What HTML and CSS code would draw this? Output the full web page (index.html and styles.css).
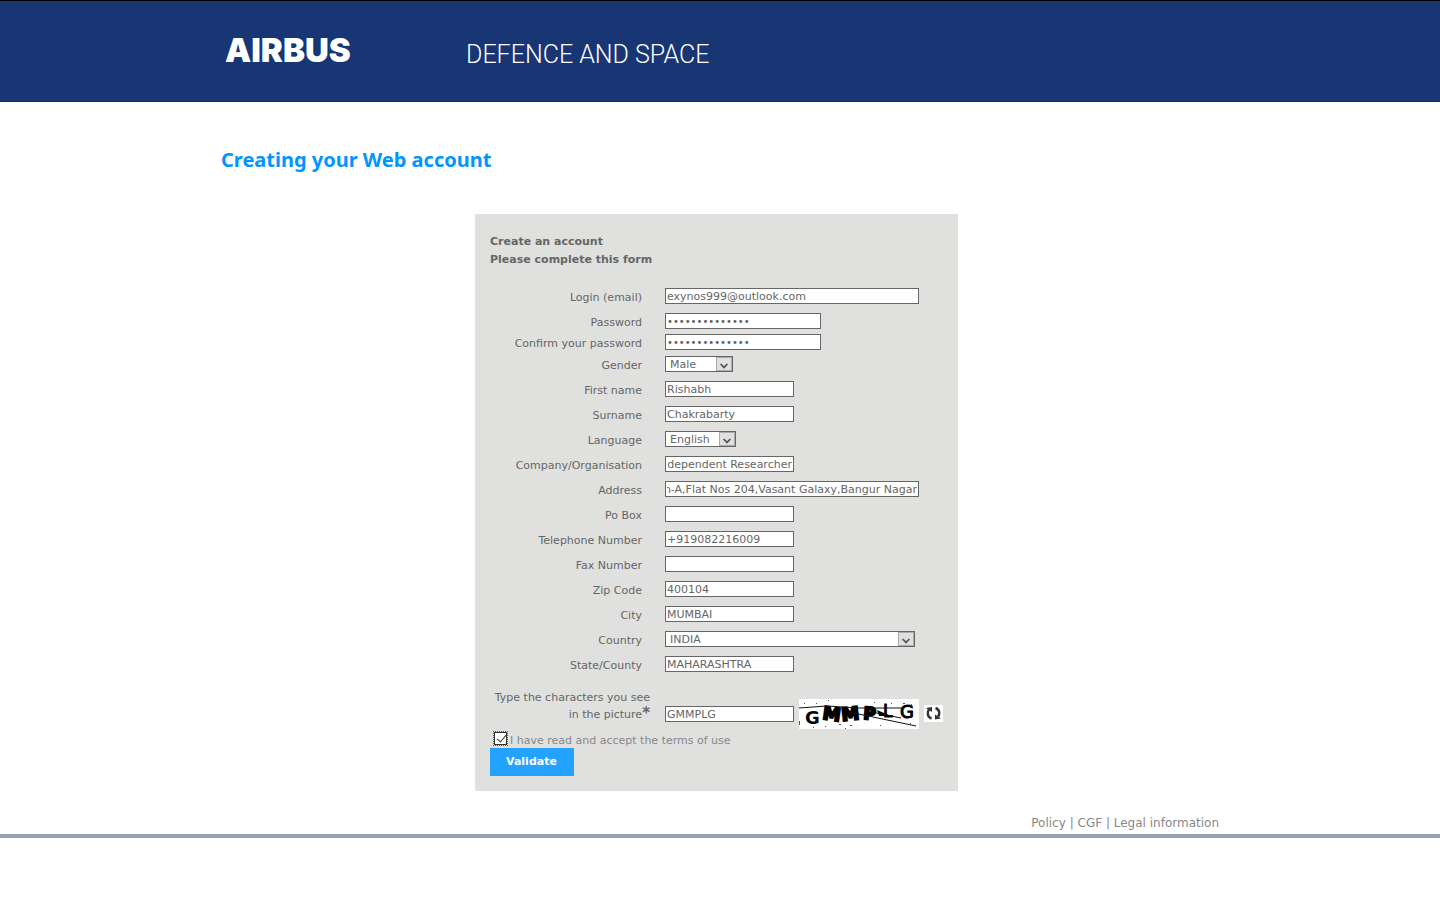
FILE: index.html
```html
<!DOCTYPE html>
<html lang="en">
<head>
<meta charset="utf-8">
<title>Creating your Web account</title>
<link rel="stylesheet" href="styles.css">
</head>
<body>
<header class="banner">
  <div class="container banner-inner">
    <svg class="logo" width="136" height="34" viewBox="0 0 136 34" role="img" aria-label="Airbus">
      <text class="logo-text" x="2" y="26">AIRBUS</text>
    </svg>
    <span class="division">DEFENCE AND SPACE</span>
  </div>
</header>
<main class="container">
  <h1 class="title">Creating your Web account</h1>
  <form class="panel">
    <h2 class="panel-title">Create an account<br>Please complete this form</h2>
    <div class="row"><label class="label" for="login">Login (email)</label><input class="field wide" id="login" type="text" value="exynos999@outlook.com"></div>
    <div class="row tighter"><label class="label" for="pw">Password</label><input class="field medium" id="pw" type="password" value="abcdefghijklmn"></div>
    <div class="row tight"><label class="label" for="pw2">Confirm your password</label><input class="field medium" id="pw2" type="password" value="abcdefghijklmn"></div>
    <div class="row"><label class="label" for="gender">Gender</label><span class="pick"><select class="field gender" id="gender"><option>Male</option></select><svg class="arrow" viewBox="0 0 16 14"><path d="M4 7l4 4 4-4"/></svg></span></div>
    <div class="row"><label class="label" for="first">First name</label><input class="field" id="first" type="text" value="Rishabh"></div>
    <div class="row"><label class="label" for="last">Surname</label><input class="field" id="last" type="text" value="Chakrabarty"></div>
    <div class="row"><label class="label" for="lang">Language</label><span class="pick"><select class="field language" id="lang"><option>English</option></select><svg class="arrow" viewBox="0 0 16 14"><path d="M4 7l4 4 4-4"/></svg></span></div>
    <div class="row"><label class="label" for="company">Company/Organisation</label><input class="field to-end" id="company" type="text" value="Independent Researcher"></div>
    <div class="row"><label class="label" for="address">Address</label><input class="field wide to-end" id="address" type="text" value="Section-A,Flat Nos 204,Vasant Galaxy,Bangur Nagar"></div>
    <div class="row"><label class="label" for="pobox">Po Box</label><input class="field" id="pobox" type="text"></div>
    <div class="row"><label class="label" for="tel">Telephone Number</label><input class="field" id="tel" type="text" value="+919082216009"></div>
    <div class="row"><label class="label" for="fax">Fax Number</label><input class="field" id="fax" type="text"></div>
    <div class="row"><label class="label" for="zip">Zip Code</label><input class="field" id="zip" type="text" value="400104"></div>
    <div class="row"><label class="label" for="city">City</label><input class="field" id="city" type="text" value="MUMBAI"></div>
    <div class="row"><label class="label" for="country">Country</label><span class="pick"><select class="field country" id="country"><option>INDIA</option></select><svg class="arrow" viewBox="0 0 16 14"><path d="M4 7l4 4 4-4"/></svg></span></div>
    <div class="row"><label class="label" for="state">State/County</label><input class="field" id="state" type="text" value="MAHARASHTRA"></div>
    <div class="row captcha-row">
      <label class="captcha-label" for="captcha">Type the characters you see<br><span>in the picture<b class="star">*</b></span></label>
      <input class="field captcha-field" id="captcha" type="text" value="GMMPLG">
      <svg class="captcha" width="120" height="30" viewBox="0 0 120 30" role="img" aria-label="Characters to type">
        <rect width="120" height="30" fill="#fff"/>
        <g class="captcha-text">
          <text x="6" y="25" font-size="18">G</text>
          <text x="23" y="20" font-size="18" stroke-width="2" rotate="8">M</text>
          <text x="43" y="22" font-size="18" stroke-width="2" rotate="-6">M</text>
          <text x="64" y="20" font-size="17" stroke-width="2" rotate="4">P</text>
          <text x="84" y="18" font-size="17" font-weight="400" stroke-width="1">L</text>
          <text x="101" y="19" font-size="18" font-weight="400" stroke-width="1">G</text>
        </g>
        <path d="M0 9L28 7L60 9L104 9M50 13L117 27M68 12L102 19" fill="none" stroke="#111"/>
        <path d="M78 11L92 17H80z" fill="#000"/>
        <path d="M0 22h1v4h-1zM29 1h1v1h-1zM5 4h1v1h-1zM17 4h1v1h-1zM104 4h2v1h-2zM112 5h1v2h-1zM92 4h1v1h-1zM26 27h1v1h-1zM40 25h2v1h-2zM51 26h2v1h-2zM46 29h1v1h-1zM14 28h1v1h-1zM81 26h1v1h-1zM98 23h1v1h-1zM75 3h1v1h-1zM111 24h1v1h-1z" fill="#555"/>
      </svg>
      <button class="refresh" type="button" aria-label="Refresh picture">
        <svg width="19" height="17" viewBox="0 0 19 17"><path d="M7.500 13.500C3 12 3 7 5 4.500M11.500 3C16 4.500 16 9.500 14 12" fill="none" stroke="#333" stroke-width="2.500"/><path d="M2 3l6-1v5zM17 13.500l-6 1v-5z" fill="#333"/></svg>
      </button>
    </div>
    <div class="terms"><input class="tick" id="terms" type="checkbox" checked><label for="terms">I have read and accept the terms of use</label></div>
    <button class="submit" type="button">Validate</button>
  </form>
</main>
<footer class="footer">
  <nav class="container links"><a href="#">Policy</a> | <a href="#">CGF</a> | <a href="#">Legal information</a></nav>
</footer>
<script src="form.js"></script>
</body>
</html>
```
FILE: styles.css
```css
* { box-sizing: border-box; }
body { margin: 0; background: #fff; color: #666; font-family: Verdana, "DejaVu Sans", sans-serif; font-size: 11px; }
.container { width: 100%; max-width: 1000px; margin: 0 auto; }
.banner { background: #183574; border-top: 1px solid #000; border-bottom: 1px solid #152c69; }
.banner-inner { display: flex; align-items: flex-start; gap: 107px; padding: 35px 0 31px 3px; }
.logo { overflow: visible; }
.logo-text { font-family: Inter, sans-serif; font-weight: 900; font-size: 33px; fill: #fff; }
.division { font-family: Roboto, sans-serif; font-weight: 300; font-size: 25px; line-height: 30px; padding-top: 4px; color: #fff; }
.title { margin: 46px 0 0 1px; font-family: "Noto Sans", sans-serif; font-weight: 700; font-size: 20px; line-height: 24px; color: #0095ff; }
.panel { width: 483px; margin: 42px 0 0 255px; padding: 19px 15px 15px; background: #e0e0de; }
.panel-title { margin: 0 0 19px; font-size: 11px; line-height: 18px; }
.row { display: flex; align-items: flex-start; height: 25px; font-size: 11px; }
.tight { height: 22px; }
.tighter { height: 21px; }
.label { width: 152px; margin-right: 23px; padding-top: 2px; line-height: 16px; text-align: right; }
.field { width: 129px; height: 16px; margin: 0; padding: 0 1px; border: 1px solid #666; border-radius: 0; background: #fff; color: #666; font: 11px/14px Verdana, "DejaVu Sans", sans-serif; outline: none; }
.wide { width: 254px; }
.medium { width: 156px; }
input[type="password"] { font-size: 10px; }
.pick { position: relative; display: flex; }
select.field { appearance: none; padding: 1px 4px 0; }
select.gender { width: 68px; }
select.language { width: 71px; }
select.country { width: 250px; }
.arrow { position: absolute; top: 1px; right: 1px; width: 16px; height: 14px; background: #e0e0e0; border: 1px solid #aaa; fill: none; stroke: #555; stroke-width: 2; pointer-events: none; }
.captcha-row { height: 48px; margin-top: 8px; }
.captcha-label { width: 160px; margin-right: 15px; line-height: 17px; text-align: right; white-space: nowrap; }
.star { font-size: 15px; line-height: 1px; }
.captcha-field { margin-top: 17px; }
.captcha { margin: 10px 5px 0; }
.captcha-text { font-family: "DejaVu Sans", sans-serif; font-weight: 700; fill: #000; stroke: #000; stroke-width: 0; }
.refresh { display: flex; margin: 16px 0 0; padding: 0; border: 0; background: #fff; }
.terms { display: flex; align-items: flex-start; height: 11px; margin-top: -5px; margin-bottom: 5px; font-size: 11px; line-height: 18px; color: #888; }
.tick { appearance: none; position: relative; width: 13px; height: 13px; margin: 0 3px 0 4px; border: 1px solid #333; background: #fff; outline: 1px dotted #555; }
.tick:checked::before { content: ""; position: absolute; left: 4px; top: 0; width: 4px; height: 8px; border: solid #333; border-width: 0 1px 1px 0; transform: rotate(40deg); }
.submit { display: block; height: 28px; padding: 0 17px 0 16px; border: 0; background: #24a2ff; color: #fff; font: 700 11px/28px Verdana, "DejaVu Sans", sans-serif; }
.footer { border-bottom: 4px solid #94a1b3; padding: 24px 0 3px; }
.links { padding-right: 1px; font-size: 12px; line-height: 16px; text-align: right; color: #888; }
.links a { color: #888; text-decoration: none; }
```
FILE: form.js
```js
document.querySelectorAll(".to-end").forEach(function (field) {
  field.scrollLeft = field.scrollWidth;
});
```
